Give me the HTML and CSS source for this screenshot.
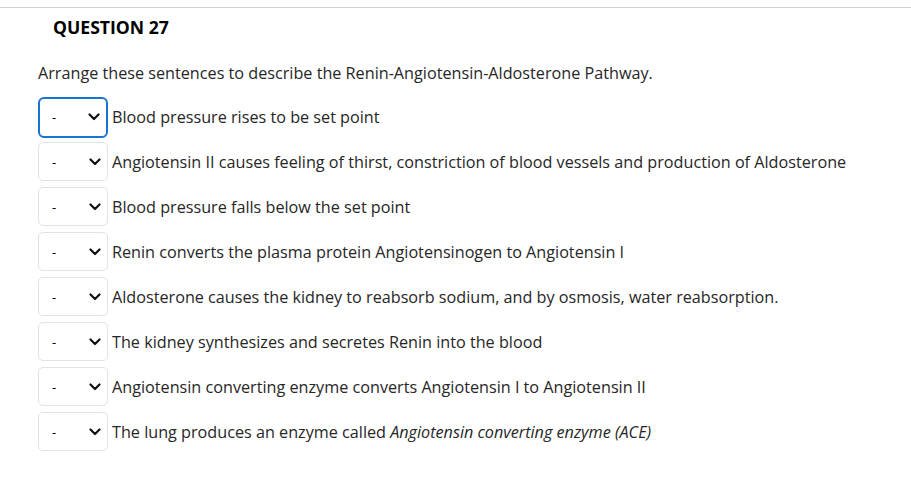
FILE: index.html
```html
<!DOCTYPE html>
<html>
<head>
<meta charset="utf-8">
<link rel="stylesheet" href="styles.css">
</head>
<body>
<div class="rule"></div>
<h2 class="qtitle">QUESTION 27</h2>
<div class="qbody">
  <p class="prompt">Arrange these sentences to describe the Renin-Angiotensin-Aldosterone Pathway.</p>
  <ul class="items">
    <li class="item"><span class="sel focus"><select><option>-</option></select><svg class="chev" viewBox="0 0 12 8"><path d="M1.5 1.5 L6 6 L10.5 1.5" /></svg></span><span class="txt">Blood pressure rises to be set point</span></li>
    <li class="item"><span class="sel"><select><option>-</option></select><svg class="chev" viewBox="0 0 12 8"><path d="M1.5 1.5 L6 6 L10.5 1.5" /></svg></span><span class="txt">Angiotensin II causes feeling of thirst, constriction of blood vessels and production of Aldosterone</span></li>
    <li class="item"><span class="sel"><select><option>-</option></select><svg class="chev" viewBox="0 0 12 8"><path d="M1.5 1.5 L6 6 L10.5 1.5" /></svg></span><span class="txt">Blood pressure falls below the set point</span></li>
    <li class="item"><span class="sel"><select><option>-</option></select><svg class="chev" viewBox="0 0 12 8"><path d="M1.5 1.5 L6 6 L10.5 1.5" /></svg></span><span class="txt">Renin converts the plasma protein Angiotensinogen to Angiotensin I</span></li>
    <li class="item"><span class="sel"><select><option>-</option></select><svg class="chev" viewBox="0 0 12 8"><path d="M1.5 1.5 L6 6 L10.5 1.5" /></svg></span><span class="txt">Aldosterone causes the kidney to reabsorb sodium, and by osmosis, water reabsorption.</span></li>
    <li class="item"><span class="sel"><select><option>-</option></select><svg class="chev" viewBox="0 0 12 8"><path d="M1.5 1.5 L6 6 L10.5 1.5" /></svg></span><span class="txt">The kidney synthesizes and secretes Renin into the blood</span></li>
    <li class="item"><span class="sel"><select><option>-</option></select><svg class="chev" viewBox="0 0 12 8"><path d="M1.5 1.5 L6 6 L10.5 1.5" /></svg></span><span class="txt">Angiotensin converting enzyme converts Angiotensin I to Angiotensin II</span></li>
    <li class="item"><span class="sel"><select><option>-</option></select><svg class="chev" viewBox="0 0 12 8"><path d="M1.5 1.5 L6 6 L10.5 1.5" /></svg></span><span class="txt">The lung produces an enzyme called <em>Angiotensin converting enzyme (ACE)</em></span></li>
  </ul>
</div>
</body>
</html>
```
FILE: styles.css
```css
html, body {
  margin: 0;
  padding: 0;
  background: #fff;
}
body {
  font-family: "Open Sans", "Liberation Sans", sans-serif;
  color: #222;
}
.rule {
  margin-top: 7px;
  height: 0;
  border-top: 1px solid #d0d0d0;
}
.qtitle {
  margin: 0;
  padding: 8px 0 0 53px;
  font-size: 17.6px;
  font-weight: 700;
  color: #000;
  line-height: 22px;
}
.qbody {
  padding-left: 38px;
}
.prompt {
  margin: 24px 0 0 0;
  font-size: 16.2px;
  line-height: 22px;
  color: #262626;
}
.items {
  list-style: none;
  margin: 13px 0 0 0;
  padding: 0;
  display: flex;
  flex-direction: column;
  gap: 6px;
}
.item {
  display: flex;
  align-items: center;
  height: 39px;
}
.sel {
  position: relative;
  width: 70px;
  height: 39px;
  box-sizing: border-box;
  border: 1px solid #e2e2e2;
  border-radius: 5px;
  flex: none;
}
.sel.focus {
  border: 2px solid #1874d0;
  border-radius: 6px;
  height: 41px;
  margin-top: 1px;
}
.sel select {
  appearance: none;
  -webkit-appearance: none;
  border: 0;
  background: transparent;
  width: 100%;
  height: 100%;
  padding: 0 0 0 13px;
  font-family: "Open Sans", "Liberation Sans", sans-serif;
  font-size: 13px;
  color: #000;
  outline: none;
}
.sel.focus select {
  padding-left: 12px;
}
.chev {
  position: absolute;
  right: 6px;
  top: 50%;
  width: 12px;
  height: 8px;
  margin-top: -4px;
  fill: none;
  stroke: #111;
  stroke-width: 2.2;
  stroke-linecap: round;
  stroke-linejoin: round;
  pointer-events: none;
}
.txt {
  margin-left: 4px;
  font-size: 16.2px;
  line-height: 22px;
  color: #262626;
}
em {
  font-style: italic;
}
```
